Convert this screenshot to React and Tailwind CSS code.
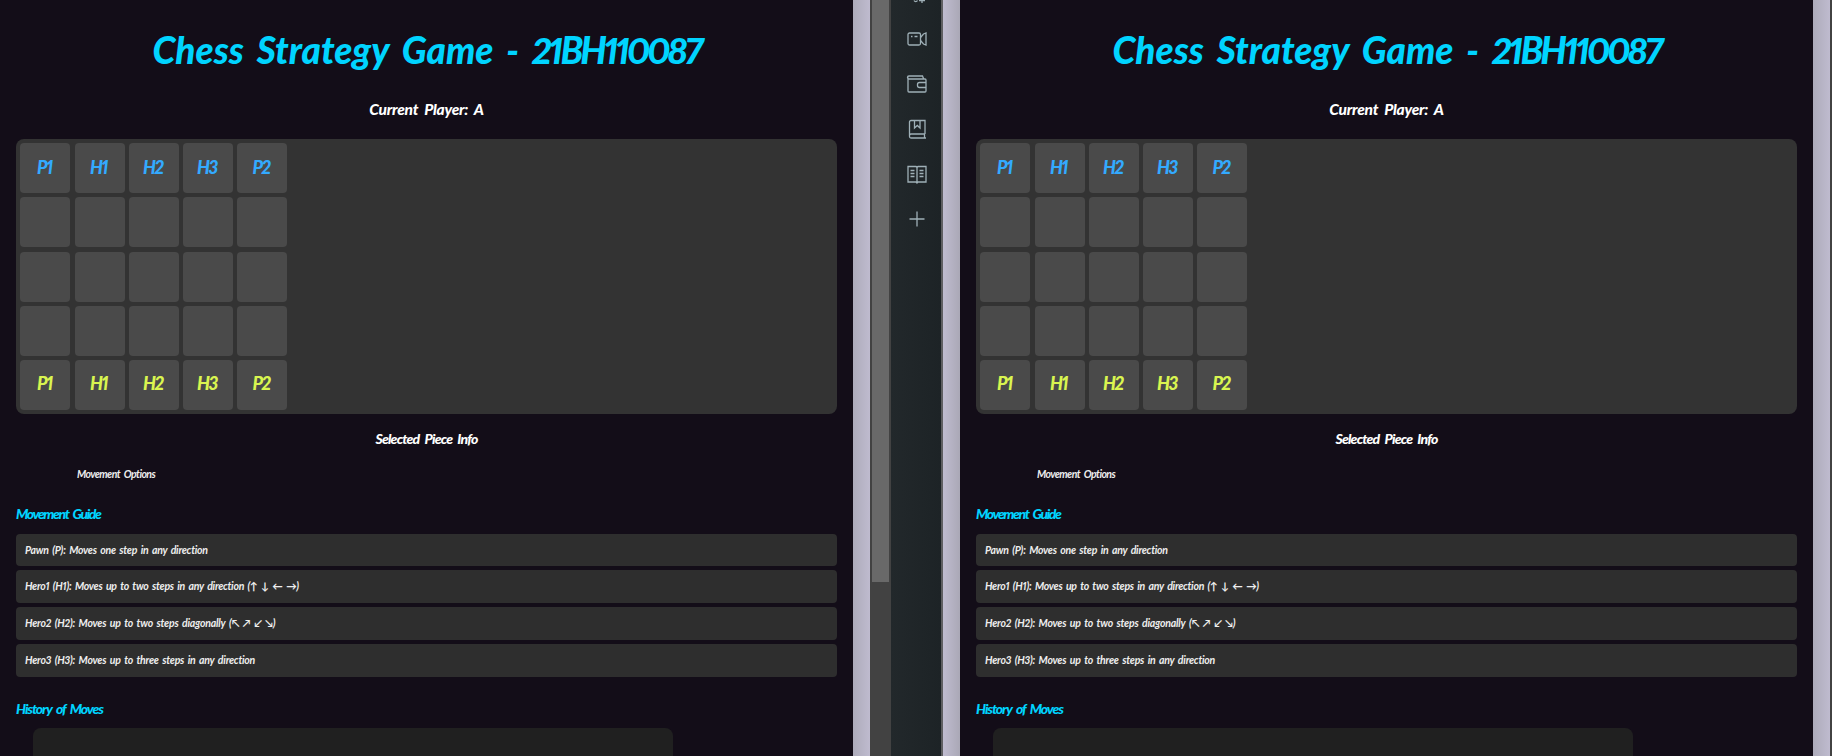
import React from "react";

const COLS = ["P1", "H1", "H2", "H3", "P2"];

const GUIDE = [
  { text: "Pawn (P): Moves one step in any direction", style: "tracking-[-0.25px]" },
  { text: "Hero1 (H1): Moves up to two steps in any direction (↑ ↓ ← →)", style: "tracking-[-0.27px]" },
  { text: "Hero2 (H2): Moves up to two steps diagonally (↖ ↗ ↙ ↘)", style: "tracking-[-0.22px]" },
  { text: "Hero3 (H3): Moves up to three steps in any direction", style: "tracking-[-0.23px]" },
];

function Board() {
  return (
    <div className="grid grid-cols-[repeat(5,50px)] gap-[4.2px] rounded-lg bg-[#333333] p-[4.4px]">
      {[0, 1, 2, 3, 4].map((row) =>
        COLS.map((name) => (
          <div
            key={row + name}
            className="flex h-[50px] items-center justify-center rounded bg-[#4a4a4a] pr-[2px] pb-[2px] text-[18px] font-black tracking-[-1.5px]"
          >
            {row === 0 && <span className="text-[#33aaff]">{name}</span>}
            {row === 4 && <span className="text-[#d9f550]">{name}</span>}
          </div>
        ))
      )}
    </div>
  );
}

function Game() {
  return (
    <main className="h-full w-[853px] shrink-0 overflow-hidden bg-[#130d18] px-4 font-['Lato',sans-serif] font-bold whitespace-nowrap text-white italic proportional-nums">
      <h1 className="mt-[24px] h-[52px] text-center text-[37px] leading-[52px] font-black tracking-[0px] [word-spacing:5px] text-[#00d4ff]">
        Chess Strategy Game - <span className="tracking-[-3px]">21BH110087</span>
      </h1>
      <h2 className="mt-[19.8px] h-[43px] text-center text-[15.5px] leading-[26px] font-black tracking-[-0.25px] [word-spacing:3px]">Current Player: A</h2>
      <Board />
      <h3 className="mt-[15px] h-[20px] text-center text-[14px] leading-[20px] font-black tracking-[-0.8px] [word-spacing:3px]">Selected Piece Info</h3>
      <p className="mt-[16px] ml-[61px] h-[17px] text-[10.5px] leading-[18px] tracking-[-0.55px] [word-spacing:2px] text-[#eeeeee]">Movement Options</p>
      <h3 className="mt-[21.2px] h-[30px] text-[14px] leading-[20px] font-black tracking-[-1.4px] [word-spacing:2.5px] text-[#00d4ff]">Movement Guide</h3>
      <ul className="flex flex-col gap-[4px]">
        {GUIDE.map((g) => (
          <li key={g.text} className={`h-[32.75px] rounded bg-[#2e2e2e] px-[9px] text-[10.5px] leading-[32.5px] [word-spacing:1.5px] text-[#eeeeee] ${g.style}`}>
            {g.text}
          </li>
        ))}
      </ul>
      <h3 className="mt-[21.4px] h-[30px] text-[14px] leading-[21px] font-black tracking-[-1.1px] [word-spacing:2.5px] text-[#00d4ff]">History of Moves</h3>
      <div className="ml-[17px] h-20 w-[640px] rounded-lg bg-[#202020]" />
    </main>
  );
}

const icon = "h-6 w-6 shrink-0 fill-none stroke-[#9fb0b7] stroke-[1.3]";

function Sidebar() {
  return (
    <aside className="flex h-full w-[50px] shrink-0 flex-col items-center gap-[21px] bg-gradient-to-r from-[#22282b] to-[#1d2326] pl-[2px]">
      <svg viewBox="0 0 24 24" className={`-mt-[18px] ${icon}`}>
        <path d="M9 18.500a2 2 0 0 0 3.500 0M17 15v6M14 18.500h6" />
      </svg>
      <svg viewBox="0 0 24 24" className={icon}>
        <rect x="3" y="6" width="12.500" height="12" rx="1.5" />
        <path d="M15.500 10.500l3-3.500 2.500-1v12l-2.500-1-3-3.500M6 9.500h1.500M9.500 9.500h3" />
      </svg>
      <svg viewBox="0 0 24 24" className={icon}>
        <path d="M3 5.500V19a1 1 0 0 0 1 1h16a1 1 0 0 0 1-1V8a1 1 0 0 0-1-1H4a1 1 0 0 1 0-3h13.500l1 2.500M21 10.500h-6.500a2 2 0 0 0-2 2v1a2 2 0 0 0 2 2H21" />
      </svg>
      <svg viewBox="0 0 24 24" className={icon}>
        <path d="M20 17V3.500H6A1.500 1.500 0 0 0 4.500 5v14.500A1.500 1.500 0 0 0 6 21h15M20 17H6a1.500 1.500 0 0 0-1.500 1.500M19.500 17v4M9.500 3.500V11l2.800-2.500L15 11V3.500" />
      </svg>
      <svg viewBox="0 0 24 24" className={icon}>
        <path d="M12 5.500v15M3 4.500h8l1 1 1-1h8v15.500h-8l-1 1-1-1H3zM5.500 8.500h4M5.500 11.500h4M5.500 14.500h4M14.500 8.500h4M14.500 11.500h4M14.500 14.500h4" />
      </svg>
      <svg viewBox="0 0 24 24" className={icon}>
        <path d="M12 4.500v15M4.500 12h15" />
      </svg>
    </aside>
  );
}

export default function App() {
  return (
    <div className="flex h-[756px] w-[1832px] overflow-hidden">
      <Game />
      <div className="h-full w-[17px] shrink-0 bg-gradient-to-r from-[#adabba] to-[#bfbbcf]" />
      <div className="h-full w-[21px] shrink-0 bg-[#424242] px-[2px]">
        <div className="h-[582px] bg-[#696969]" />
      </div>
      <Sidebar />
      <div className="h-full w-[2px] shrink-0 bg-[#5f5f62]" />
      <div className="h-full w-[17px] shrink-0 bg-gradient-to-r from-[#c0bcd0] to-[#aaa8b6]" />
      <Game />
      <div className="h-full w-[17px] shrink-0 bg-gradient-to-r from-[#adabba] to-[#bfbbcf]" />
      <div className="h-full w-[2px] shrink-0 bg-[#424242]" />
    </div>
  );
}
